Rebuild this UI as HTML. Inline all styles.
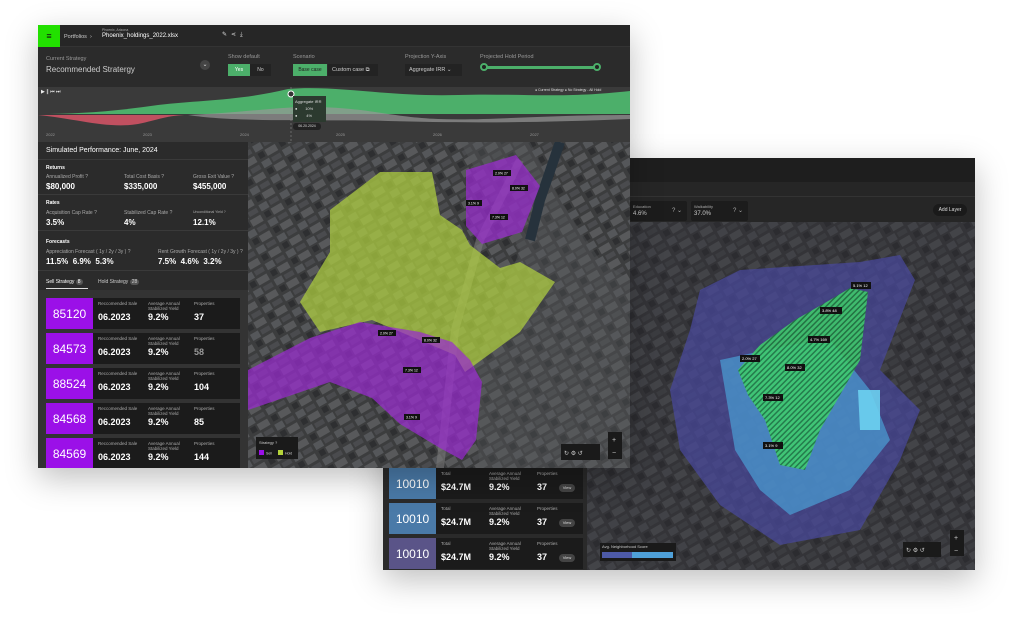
<!DOCTYPE html>
<html><head><meta charset="utf-8"><style>
*{box-sizing:border-box;margin:0;padding:0}
body{width:1013px;height:623px;background:#fff;position:relative;overflow:hidden;font-family:"Liberation Sans",sans-serif;color:#ddd}
.abs{position:absolute}
.win{position:absolute;box-shadow:0 10px 30px rgba(0,0,0,.25)}
.lbl{font-size:5px;color:#aaa}
.val{font-size:8px;color:#fff;font-weight:bold}
.card{position:absolute;left:8px;width:194px;height:31px;background:#1b1b1b}
.card .id,.fc .id{position:absolute;left:0;top:0;width:47px;height:31px;background:#9b10e8;color:#fff;font-size:12px;display:flex;align-items:center;justify-content:center}
.card .c,.fc .c{position:absolute;top:3px;font-size:4.5px;color:#aaa;line-height:5px}
.card .c b,.fc .c b{position:absolute;top:14px;left:0;font-size:9px;color:#fff;white-space:nowrap}
.fc{position:absolute;left:6px;width:194px;height:31px;background:#1b1b1b}
.fc .id{background:#4a7aa8}
.view{position:absolute;right:8px;top:16px;width:16px;height:8px;border-radius:4px;background:#444;font-size:4px;color:#ddd;text-align:center;line-height:8px}
</style></head><body>
<svg width="0" height="0" style="position:absolute"><defs>
<pattern id="city" width="24" height="18" patternUnits="userSpaceOnUse" patternTransform="rotate(-30)">
<rect width="24" height="18" fill="#3c3d3e"/>
<rect x="1" y="1" width="9" height="7" fill="#55575a"/><rect x="12" y="2" width="10" height="5" fill="#4a4b4e"/>
<rect x="2" y="10" width="6" height="6" fill="#2e2f31"/><rect x="10" y="10" width="12" height="7" fill="#58595b"/>
</pattern>
<pattern id="h" width="4" height="4" patternUnits="userSpaceOnUse" patternTransform="rotate(45)"><rect width="4" height="4" fill="#3ed06a"/><rect width="1.5" height="4" fill="#1e7a38"/></pattern>
</defs></svg>

<!-- FRONT WINDOW -->
<div class="win" style="left:383px;top:158px;width:592px;height:412px;background:#2a2a2a;overflow:hidden">
  <div class="abs" style="left:0;top:0;width:592px;height:24px;background:#1e1e1e"></div>
  <div class="abs" style="left:0;top:24px;width:592px;height:15px;background:#262626;border-bottom:1px solid #333"></div>
  <div class="abs" style="left:0;top:39px;width:592px;height:25px;background:#262626"></div>
  <div class="abs" style="left:247px;top:43px;width:57px;height:20px;background:#1c1c1c;border-radius:2px"><div class="lbl" style="position:absolute;left:3px;top:3px;font-size:4px">Education</div><div style="position:absolute;left:3px;top:10px;font-size:6px;color:#ccc">4.6%</div><div style="position:absolute;right:5px;top:6px;font-size:6px;color:#aaa">? ⌄</div></div>
  <div class="abs" style="left:308px;top:43px;width:57px;height:20px;background:#1c1c1c;border-radius:2px"><div class="lbl" style="position:absolute;left:3px;top:3px;font-size:4px">Walkability</div><div style="position:absolute;left:3px;top:10px;font-size:6px;color:#ccc">37.0%</div><div style="position:absolute;right:5px;top:6px;font-size:6px;color:#aaa">? ⌄</div></div>
  <div class="abs" style="left:550px;top:46px;width:34px;height:12px;background:#1a1a1a;border-radius:6px;font-size:5px;color:#ddd;text-align:center;line-height:12px">Add Layer</div>
  <svg class="abs" style="left:0;top:0" width="592" height="412" viewBox="383 158 592 412">
    <rect x="587" y="222" width="388" height="348" fill="url(#city)"/>
    <rect x="587" y="222" width="388" height="348" fill="#2a2a30" opacity=".45"/>
    <polygon points="700,290 740,270 860,262 900,255 915,280 880,370 920,410 900,460 860,530 780,545 720,505 680,450 670,390 690,330" fill="#4848a0" opacity=".7"/>
    <polygon points="720,360 790,345 830,340 870,390 890,440 850,490 790,515 760,490 735,450" fill="#4a9ad0" opacity=".75"/>
    <polygon points="858,390 880,390 880,430 860,430" fill="#6cd0f0" opacity=".9"/>
    <polygon points="795,320 830,300 850,288 868,292 860,360 840,395 820,430 805,470 780,465 765,420 748,395 738,370 760,345" fill="url(#h)" opacity=".85"/>
    <g font-size="4" fill="#fff"><rect x="851" y="282" width="20" height="7" fill="#111"/><text x="853" y="287">5.1% 12</text>
    <rect x="820" y="307" width="22" height="7" fill="#111"/><text x="822" y="312">3.8% 48</text>
    <rect x="808" y="336" width="22" height="7" fill="#111"/><text x="810" y="341">4.7% 169</text>
    <rect x="740" y="355" width="20" height="7" fill="#111"/><text x="742" y="360">2.0% 27</text>
    <rect x="785" y="364" width="20" height="7" fill="#111"/><text x="787" y="369">8.0% 32</text>
    <rect x="763" y="394" width="20" height="7" fill="#111"/><text x="765" y="399">7.3% 12</text>
    <rect x="763" y="442" width="20" height="7" fill="#111"/><text x="765" y="447">3.1% 9</text></g>
    <rect x="600" y="543" width="76" height="18" fill="#1a1a1a"/><text x="602" y="548" font-size="4" fill="#ccc">Avg. Neighborhood Score</text>
    <rect x="602" y="552" width="71" height="6" fill="#4fa0d8"/><rect x="602" y="552" width="30" height="6" fill="#4d5aa8"/>
    <rect x="903" y="542" width="38" height="15" fill="#1a1a1a"/><text x="906" y="552" font-size="6" fill="#ccc">↻  ⚙  ↺</text>
    <rect x="950" y="530" width="14" height="26" fill="#1a1a1a"/><text x="954" y="540" font-size="7" fill="#ccc">+</text><text x="954" y="553" font-size="7" fill="#ccc">−</text>
  </svg>
  <div class="abs" style="left:0;top:310px;width:204px;height:102px;background:#2a2a2a">
    <div class="fc" style="top:0"><div class="id">10010</div><div class="c" style="left:52px">Total<b>$24.7M</b></div><div class="c" style="left:100px">Average Annual<br>Stabilized Yield<b>9.2%</b></div><div class="c" style="left:148px">Properties<b>37</b></div><div class="view">View</div></div>
    <div class="fc" style="top:35px"><div class="id">10010</div><div class="c" style="left:52px">Total<b>$24.7M</b></div><div class="c" style="left:100px">Average Annual<br>Stabilized Yield<b>9.2%</b></div><div class="c" style="left:148px">Properties<b>37</b></div><div class="view">View</div></div>
    <div class="fc" style="top:70px"><div class="id" style="background:#5a5488">10010</div><div class="c" style="left:52px">Total<b>$24.7M</b></div><div class="c" style="left:100px">Average Annual<br>Stabilized Yield<b>9.2%</b></div><div class="c" style="left:148px">Properties<b>37</b></div><div class="view">View</div></div>
  </div>
</div>

<!-- BACK WINDOW -->
<div class="win" style="left:38px;top:25px;width:592px;height:443px;background:#2b2b2b;overflow:hidden">
  <div class="abs" style="left:0;top:0;width:592px;height:22px;background:#262626;border-bottom:1px solid #333"></div>
  <div class="abs" style="left:0;top:0;width:22px;height:22px;background:#22e000;color:#111;font-size:9px;text-align:center;line-height:22px">≡</div>
  <div class="abs" style="left:26px;top:9px;font-size:5.5px;color:#ccc">Portfolios &nbsp;›</div>
  <div class="abs" style="left:64px;top:3px;font-size:3.5px;color:#aaa">Phoenix, Arizona</div>
  <div class="abs" style="left:64px;top:8px;font-size:6px;color:#fff">Phoenix_holdings_2022.xlsx</div>
  <div class="abs" style="left:184px;top:6px;font-size:6px;color:#ddd;letter-spacing:4px">✎⋖⤓</div>
  <div class="abs" style="left:8px;top:31px;font-size:5.5px;color:#999">Current Strategy</div>
  <div class="abs" style="left:8px;top:40px;font-size:8px;color:#ccc">Recommended Stratergy</div>
  <div class="abs" style="left:162px;top:35px;width:10px;height:10px;border-radius:5px;background:#444;font-size:6px;text-align:center;line-height:10px">⌄</div>
  <div class="abs" style="left:190px;top:29px;font-size:5.5px;color:#999">Show default</div>
  <div class="abs" style="left:190px;top:39px;width:22px;height:12px;background:#4caf6a;color:#fff;font-size:5px;text-align:center;line-height:12px">Yes</div>
  <div class="abs" style="left:212px;top:39px;width:21px;height:12px;background:#232323;color:#ccc;font-size:5px;text-align:center;line-height:12px">No</div>
  <div class="abs" style="left:255px;top:29px;font-size:5.5px;color:#999">Scenario</div>
  <div class="abs" style="left:255px;top:39px;width:34px;height:12px;background:#4caf6a;color:#222;font-size:5px;text-align:center;line-height:12px">Base case</div>
  <div class="abs" style="left:290px;top:39px;width:50px;height:12px;background:#232323;color:#ccc;font-size:5.5px;line-height:12px;padding-left:4px">Custom case ⧉</div>
  <div class="abs" style="left:367px;top:29px;font-size:5.5px;color:#999">Projection Y-Axis</div>
  <div class="abs" style="left:367px;top:39px;width:57px;height:12px;background:#232323;color:#ccc;font-size:5.5px;line-height:12px;padding-left:4px">Aggregate IRR ⌄</div>
  <div class="abs" style="left:442px;top:29px;font-size:5.5px;color:#999">Projected Hold Period</div>
  <div class="abs" style="left:446px;top:41px;width:113px;height:3px;background:#4caf6a"></div>
  <div class="abs" style="left:442px;top:38px;width:8px;height:8px;border-radius:4px;border:2px solid #4caf6a;background:#222"></div>
  <div class="abs" style="left:555px;top:38px;width:8px;height:8px;border-radius:4px;border:2px solid #4caf6a;background:#222"></div>
  <div class="abs" style="left:0;top:62px;width:592px;height:55px;background:#3a3a3a"></div>
  <svg class="abs" style="left:0;top:62px" width="592" height="55">
    <path d="M0,27 C40,27 80,24 120,18 C160,13 200,14 250,2 C300,-2 350,10 420,8 C480,6 520,12 592,4 L592,27 Z" fill="#4caf6a"/>
    <path d="M0,28 C40,32 70,42 100,37 C120,33 130,28 150,28 Z" fill="#c05060"/>
    <path d="M150,28 C200,26 240,20 270,20 C330,20 350,30 400,32 C450,34 500,28 592,28 L592,32 C500,36 420,36 350,34 C300,32 200,36 150,28Z" fill="#999" opacity=".7"/>
    <line x1="253" y1="0" x2="253" y2="55" stroke="#888" stroke-dasharray="2,2" stroke-width=".6"/>
    <circle cx="253" cy="7" r="3" fill="#333" stroke="#fff"/>
    <g font-size="4" fill="#999"><text x="8" y="49">2022</text><text x="105" y="49">2023</text><text x="202" y="49">2024</text><text x="298" y="49">2025</text><text x="395" y="49">2026</text><text x="492" y="49">2027</text></g>
    <text x="3" y="6" font-size="5" fill="#eee">▶ ∥ ⏮ ⏭</text>
    <text x="497" y="4" font-size="3.5" fill="#ddd">● Current Strategy  ● No Strategy - All Hold</text>
  </svg>
  <div class="abs" style="left:255px;top:71px;width:33px;height:26px;background:#2c3a2f;font-size:4px;color:#ddd;padding:2px;line-height:7px">Aggregate IRR<br>● &nbsp; &nbsp; &nbsp; 10%<br>● &nbsp; &nbsp; &nbsp; &nbsp;4%</div>
  <div class="abs" style="left:255px;top:98px;width:28px;height:7px;background:#222;border-radius:3px;font-size:3.5px;text-align:center;line-height:7px">06.20.2024</div>
  <!-- left panel -->
  <div class="abs" style="left:0;top:117px;width:210px;height:326px;background:#2b2b2b">
    <div class="abs" style="left:0;top:0;width:210px;height:18px;border-bottom:1px solid #3a3a3a;padding:5px 8px;font-size:7px;color:#fff">Simulated Performance: June, 2024</div>
    <div class="abs" style="left:8px;top:23px;font-size:5px;color:#fff;font-weight:bold">Returns</div>
    <div class="abs lbl" style="left:8px;top:32px">Annualized Profit ?</div><div class="abs val" style="left:8px;top:40px">$80,000</div>
    <div class="abs lbl" style="left:86px;top:32px">Total Cost Basis ?</div><div class="abs val" style="left:86px;top:40px">$335,000</div>
    <div class="abs lbl" style="left:155px;top:32px">Gross Exit Value ?</div><div class="abs val" style="left:155px;top:40px">$455,000</div>
    <div class="abs" style="left:0;top:52px;width:210px;border-top:1px solid #3a3a3a"></div>
    <div class="abs" style="left:8px;top:58px;font-size:5px;color:#fff;font-weight:bold">Rates</div>
    <div class="abs lbl" style="left:8px;top:68px">Acquisition Cap Rate ?</div><div class="abs val" style="left:8px;top:76px">3.5%</div>
    <div class="abs lbl" style="left:86px;top:68px">Stabilized Cap Rate ?</div><div class="abs val" style="left:86px;top:76px">4%</div>
    <div class="abs lbl" style="left:155px;top:68px;font-size:3.5px">Unconditional Yield ?</div><div class="abs val" style="left:155px;top:76px">12.1%</div>
    <div class="abs" style="left:0;top:88px;width:210px;border-top:1px solid #3a3a3a"></div>
    <div class="abs" style="left:8px;top:97px;font-size:5px;color:#fff;font-weight:bold">Forecasts</div>
    <div class="abs lbl" style="left:8px;top:107px">Appreciation Forecast ( 1y / 2y / 3y ) ?</div><div class="abs val" style="left:8px;top:115px">11.5% &nbsp;6.9% &nbsp;5.3%</div>
    <div class="abs lbl" style="left:120px;top:107px">Rent Growth Forecast ( 1y / 2y / 3y ) ?</div><div class="abs val" style="left:120px;top:115px">7.5% &nbsp;4.6% &nbsp;3.2%</div>
    <div class="abs" style="left:0;top:128px;width:210px;border-top:1px solid #3a3a3a"></div>
    <div class="abs" style="left:8px;top:137px;font-size:5px;color:#fff">Sell Strategy <span style="background:#555;border-radius:3px;padding:0 2px">8</span></div>
    <div class="abs" style="left:8px;top:146px;width:42px;height:1px;background:#ddd"></div>
    <div class="abs" style="left:60px;top:137px;font-size:5px;color:#ccc">Hold Strategy <span style="background:#555;border-radius:3px;padding:0 2px">28</span></div>
    <div class="abs" style="left:0;top:148px;width:210px;height:178px;background:#333"></div>
    <div class="card" style="top:156px"><div class="id">85120</div><div class="c" style="left:52px">Reccomended Sale<b>06.2023</b></div><div class="c" style="left:102px">Average Annual<br>Stabilized Yield<b>9.2%</b></div><div class="c" style="left:148px">Properties<b>37</b></div></div>
    <div class="card" style="top:191px"><div class="id">84573</div><div class="c" style="left:52px">Reccomended Sale<b>06.2023</b></div><div class="c" style="left:102px">Average Annual<br>Stabilized Yield<b>9.2%</b></div><div class="c" style="left:148px">Properties<b style="color:#999">58</b></div></div>
    <div class="card" style="top:226px"><div class="id">88524</div><div class="c" style="left:52px">Reccomended Sale<b>06.2023</b></div><div class="c" style="left:102px">Average Annual<br>Stabilized Yield<b>9.2%</b></div><div class="c" style="left:148px">Properties<b>104</b></div></div>
    <div class="card" style="top:261px"><div class="id">84568</div><div class="c" style="left:52px">Reccomended Sale<b>06.2023</b></div><div class="c" style="left:102px">Average Annual<br>Stabilized Yield<b>9.2%</b></div><div class="c" style="left:148px">Properties<b>85</b></div></div>
    <div class="card" style="top:296px"><div class="id">84569</div><div class="c" style="left:52px">Reccomended Sale<b>06.2023</b></div><div class="c" style="left:102px">Average Annual<br>Stabilized Yield<b>9.2%</b></div><div class="c" style="left:148px">Properties<b>144</b></div></div>
  </div>
  <!-- map -->
  <svg class="abs" style="left:210px;top:117px" width="382" height="326" viewBox="248 142 382 326">
    <rect x="248" y="142" width="382" height="326" fill="url(#city)"/>
    <path d="M460,142 L530,142 L560,200 L600,260 L630,280 L630,468 L480,468 L470,380 L500,300 L520,250 Z" fill="#56585a" opacity=".4"/>
    <path d="M440,468 L455,330 L480,240 L520,160" stroke="#7a7a7a" stroke-width="8" fill="none" opacity=".6"/>
    <path d="M560,142 L540,200 L530,240" stroke="#26323c" stroke-width="10" fill="none"/>
    <polygon points="330,210 380,172 432,172 440,215 462,230 470,245 500,268 520,262 555,282 520,332 465,372 455,355 372,320 320,332 300,302 330,252" fill="#b0d040" opacity=".72"/>
    <polygon points="466,170 516,155 540,186 522,232 482,244 466,226" fill="#9a2bd0" opacity=".72"/>
    <polygon points="310,338 360,322 420,332 452,342 470,360 482,382 476,440 462,460 440,448 400,424 372,398 330,382 248,410 248,370" fill="#9a2bd0" opacity=".72"/>
    <g font-size="3.5" fill="#fff"><rect x="493" y="170" width="18" height="6" fill="#111"/><text x="495" y="174.5">2.0% 27</text>
    <rect x="510" y="185" width="18" height="6" fill="#111"/><text x="512" y="189.5">8.0% 32</text>
    <rect x="466" y="200" width="16" height="6" fill="#111"/><text x="468" y="204.5">3.1% 9</text>
    <rect x="490" y="214" width="18" height="6" fill="#111"/><text x="492" y="218.5">7.3% 12</text>
    <rect x="378" y="330" width="18" height="6" fill="#111"/><text x="380" y="334.5">2.0% 27</text>
    <rect x="422" y="337" width="18" height="6" fill="#111"/><text x="424" y="341.5">8.0% 32</text>
    <rect x="403" y="367" width="18" height="6" fill="#111"/><text x="405" y="371.5">7.3% 12</text>
    <rect x="404" y="414" width="16" height="6" fill="#111"/><text x="406" y="418.5">3.1% 9</text></g>
    <rect x="256" y="437" width="42" height="22" fill="#1a1a1a"/><text x="259" y="444" font-size="4" fill="#ccc">Strategy ?</text>
    <rect x="259" y="450" width="5" height="5" fill="#9b10e8"/><rect x="278" y="450" width="5" height="5" fill="#b5d43a"/>
    <text x="266" y="454.5" font-size="3.5" fill="#ccc">Sell</text><text x="285" y="454.5" font-size="3.5" fill="#ccc">Hold</text>
    <rect x="561" y="444" width="39" height="16" fill="#1a1a1a"/><text x="564" y="455" font-size="6" fill="#ccc">↻  ⚙  ↺</text>
    <rect x="608" y="432" width="14" height="27" fill="#1a1a1a"/><text x="612" y="442" font-size="7" fill="#ccc">+</text><text x="612" y="455" font-size="7" fill="#ccc">−</text>
  </svg>
</div>
</body></html>
